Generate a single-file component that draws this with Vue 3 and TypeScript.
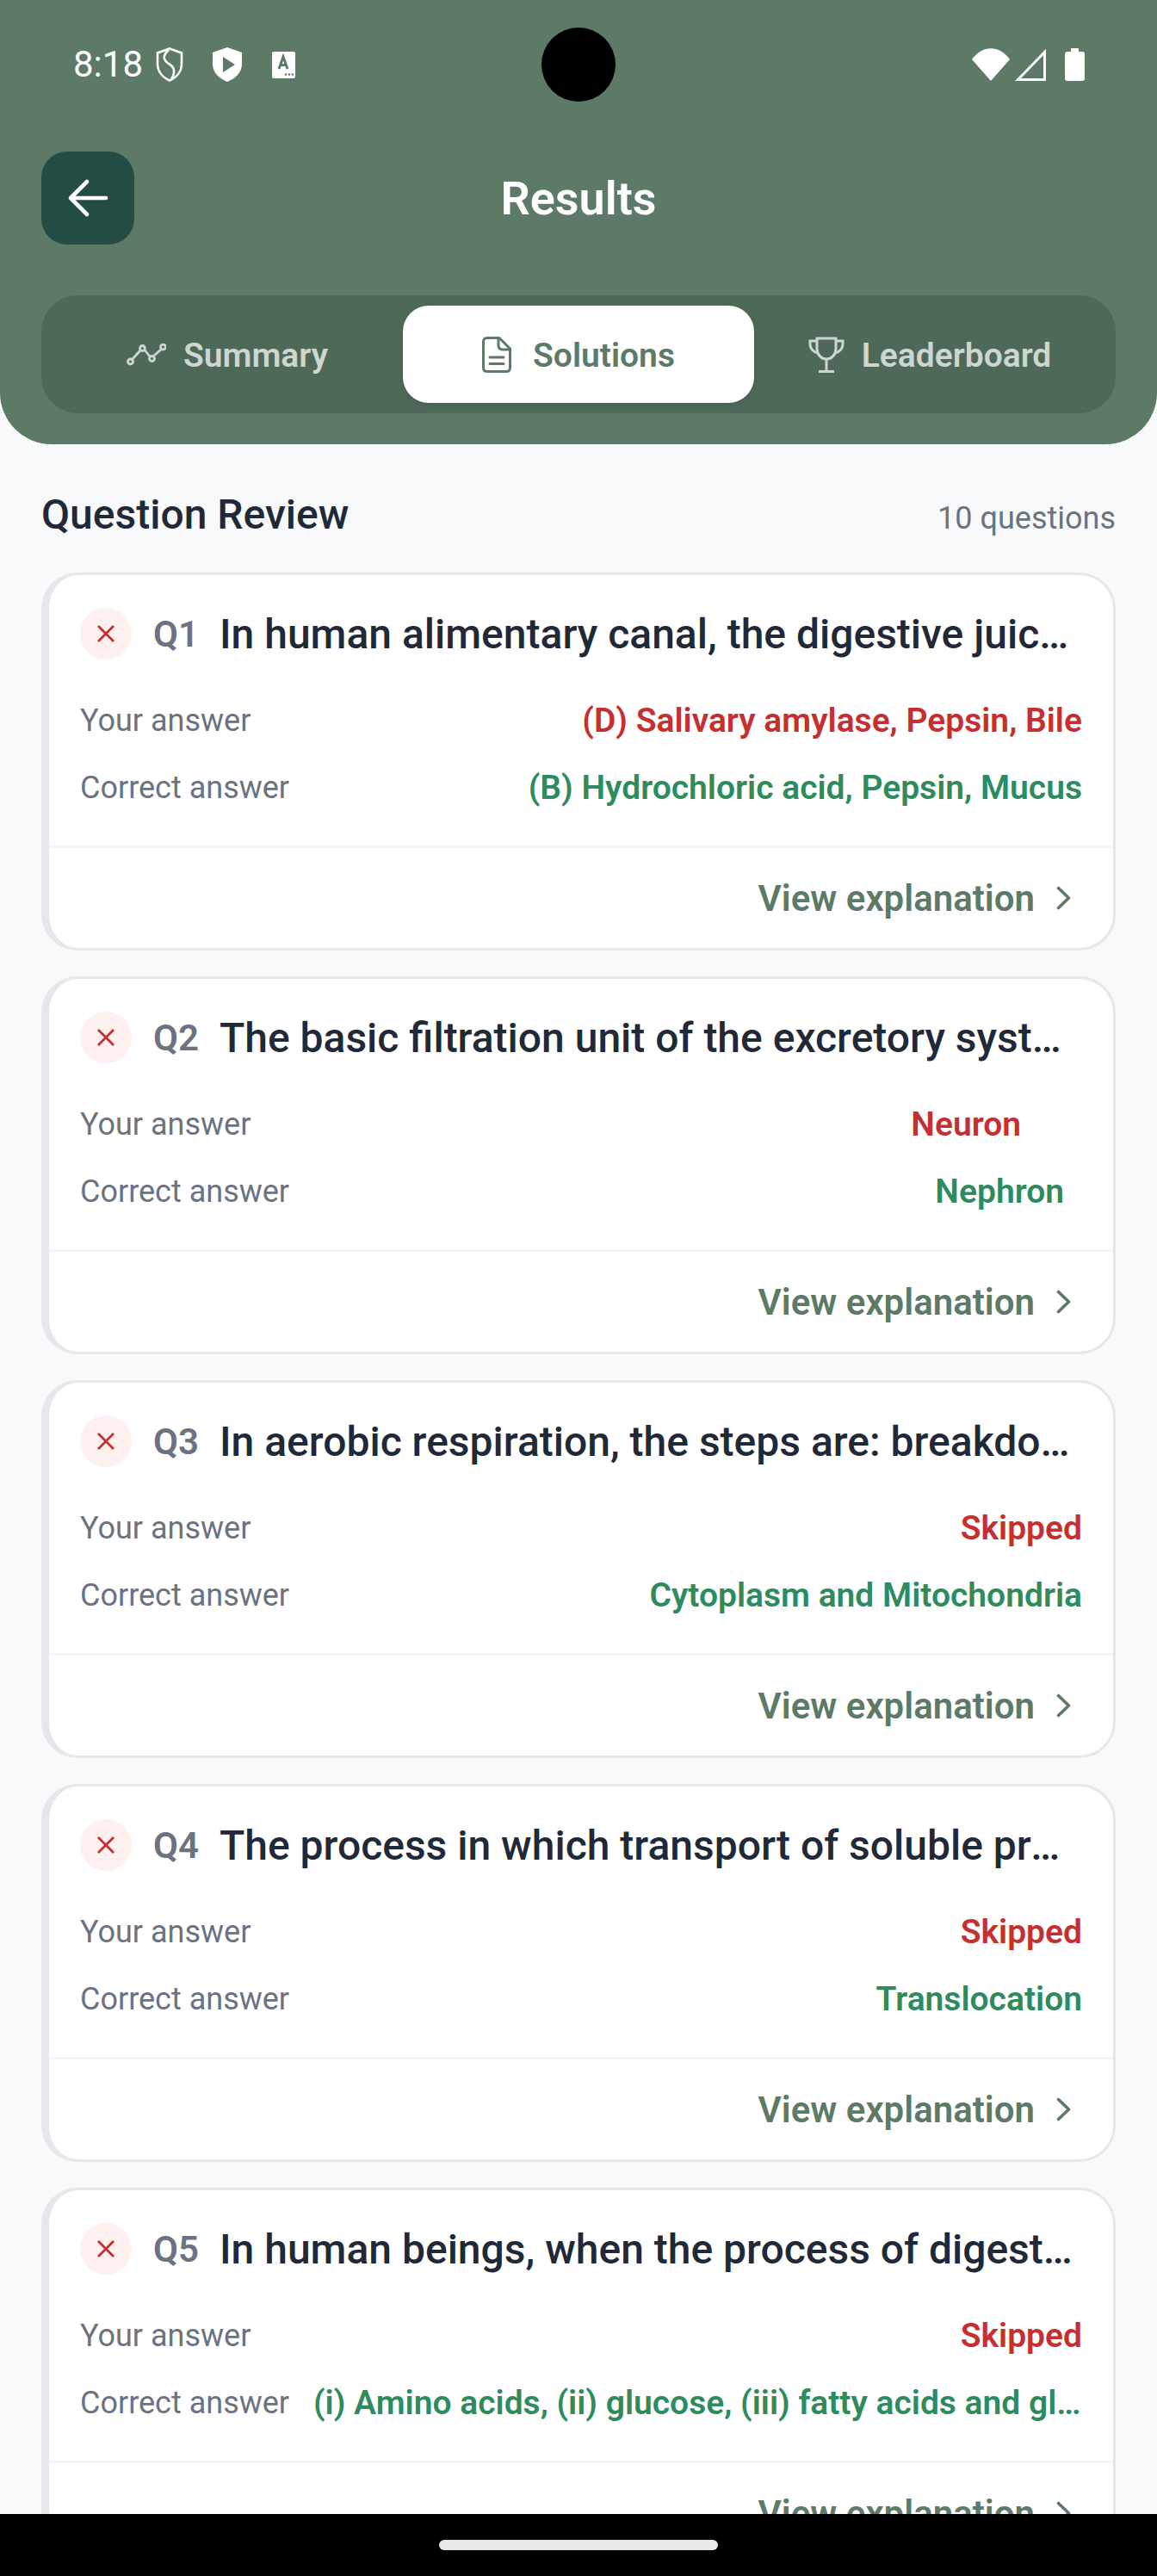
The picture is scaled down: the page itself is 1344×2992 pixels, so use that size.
<script setup lang="ts">
type Question = {
  id: number;
  title: string;
  yours: string;
  correct: string;
  yoursInset?: number;
  correctInset?: number;
};

const questions: Question[] = [
  {
    id: 1,
    title: "In human alimentary canal, the digestive juices secreted by the stomach contain",
    yours: "(D) Salivary amylase, Pepsin, Bile",
    correct: "(B) Hydrochloric acid, Pepsin, Mucus",
  },
  {
    id: 2,
    title: "The basic filtration unit of the excretory system in human beings is called",
    yours: "Neuron",
    correct: "Nephron",
    yoursInset: 71,
    correctInset: 21,
  },
  {
    id: 3,
    title: "In aerobic respiration, the steps are: breakdown of glucose occurs in",
    yours: "Skipped",
    correct: "Cytoplasm and Mitochondria",
  },
  {
    id: 4,
    title: "The process in which transport of soluble products of photosynthesis takes place",
    yours: "Skipped",
    correct: "Translocation",
  },
  {
    id: 5,
    title: "In human beings, when the process of digestion is completed, the food is broken into",
    yours: "Skipped",
    correct: "(i) Amino acids, (ii) glucose, (iii) fatty acids and glycerol",
  },
];
</script>

<template>
  <div class="screen">
    <header class="header">
      <div class="status">
        <div class="status-left">
          <span class="time">8:18</span>
          <svg class="ic-shield" viewBox="0 0 32 40" fill="none" stroke="#fff" stroke-width="2.6">
            <path d="M16 1.5 L30 6.5 V19 C30 28 24 35 16 38.5 C8 35 2 28 2 19 V6.5 Z" />
            <path d="M15 3 C7 10 9 15 15 19 C22 23 23 29 18 37" />
          </svg>
          <svg class="ic-play" viewBox="0 0 34 40">
            <path fill="#fff" d="M17 0 L34 6 V19 C34 29 27 36 17 40 C7 36 0 29 0 19 V6 Z" />
            <path fill="#5c7a66" d="M12 11 L26 20 L12 29 Z" />
          </svg>
          <svg class="ic-a" viewBox="0 0 27 31">
            <rect width="27" height="31" rx="2" fill="#fff" />
            <path d="M8 20 L13 6 L18 20 M9.5 15.5 H16.5" fill="none" stroke="#5c7a66" stroke-width="3" />
            <circle cx="16" cy="26.5" r="1.3" fill="#5c7a66" />
            <circle cx="20" cy="26.5" r="1.3" fill="#5c7a66" />
            <circle cx="24" cy="26.5" r="1.3" fill="#5c7a66" />
          </svg>
        </div>
        <div class="camera"></div>
        <div class="status-right">
          <svg class="ic-wifi" viewBox="0 0 44 38">
            <path fill="#fff" d="M0 13 C12 -4 32 -4 44 13 L22 38 Z" />
          </svg>
          <svg class="ic-signal" viewBox="0 0 36 37" fill="none" stroke="#fff" stroke-width="3">
            <path d="M34.5 3.5 V35.5 H3.5 Z" />
          </svg>
          <svg class="ic-battery" viewBox="0 0 23 38">
            <path fill="#fff" d="M7 0 H16 V4 H20 Q23 4 23 7 V35 Q23 38 20 38 H3 Q0 38 0 35 V7 Q0 4 3 4 H7 Z" />
          </svg>
        </div>
      </div>

      <div class="nav">
        <button class="back" type="button">
          <svg viewBox="0 0 48 48" fill="none" stroke="#fff" stroke-width="4.6" stroke-linecap="round" stroke-linejoin="round">
            <path d="M45 24 H4 M23 5 L4 24 L23 43" />
          </svg>
        </button>
        <h1 class="title">Results</h1>
      </div>

      <div class="tabs">
        <div class="tab">
          <svg class="tab-icon trend" viewBox="0 0 46 26" fill="none" stroke="currentColor" stroke-width="2.8">
            <path d="M6.5 18.5 L16 8 M21.5 8 L27 15 M32 14 L40.5 6.5" />
            <circle cx="4.5" cy="21" r="3" />
            <circle cx="18.5" cy="5.5" r="3" />
            <circle cx="29.5" cy="17.5" r="3" />
            <circle cx="42.5" cy="4" r="3" />
          </svg>
          <span>Summary</span>
        </div>
        <div class="tab active">
          <svg class="tab-icon doc" viewBox="0 0 34 42" fill="none" stroke="currentColor" stroke-width="3" stroke-linejoin="round" stroke-linecap="round">
            <path d="M20 1.5 H6 Q1.5 1.5 1.5 6 V36 Q1.5 40.5 6 40.5 H28 Q32.5 40.5 32.5 36 V14 Z" />
            <path d="M19 2 V10 Q19 15 24 15 H32" />
            <path d="M9 24 H25 M9 31.5 H25" />
          </svg>
          <span>Solutions</span>
        </div>
        <div class="tab">
          <svg class="tab-icon cup" viewBox="0 0 42 42" fill="none" stroke="currentColor" stroke-width="3">
            <path d="M10 2 H32 V14 C32 21 27 26 21 26 C15 26 10 21 10 14 Z" />
            <path d="M10 5 H2 V9 C2 14 6 18 11 19 M32 5 H40 V9 C40 14 36 18 31 19" />
            <path d="M21 26 V40 M12 40.5 H30" />
          </svg>
          <span>Leaderboard</span>
        </div>
      </div>
    </header>

    <main class="content">
      <div class="section-head">
        <h2>Question Review</h2>
        <span>10 questions</span>
      </div>

      <article v-for="q in questions" :key="q.id" class="card">
        <div class="card-body">
          <div class="q-head">
            <span class="wrong">
              <svg viewBox="0 0 20 20" fill="none" stroke="#c62f2f" stroke-width="2.8">
                <path d="M1 1 L19 19 M19 1 L1 19" />
              </svg>
            </span>
            <span class="q-num">Q{{ q.id }}</span>
            <span class="q-title">{{ q.title }}</span>
          </div>
          <div class="row">
            <span class="label">Your answer</span>
            <span class="value bad" :style="{ marginRight: (q.yoursInset || 0) + 'px' }">{{ q.yours }}</span>
          </div>
          <div class="row">
            <span class="label">Correct answer</span>
            <span class="value good" :style="{ marginRight: (q.correctInset || 0) + 'px' }">{{ q.correct }}</span>
          </div>
        </div>
        <div class="card-foot">
          <span>View explanation</span>
          <svg viewBox="0 0 17 28" fill="none" stroke="#5c7a66" stroke-width="3.6" stroke-linecap="round" stroke-linejoin="round">
            <path d="M2.5 2.5 L14.5 14 L2.5 25.5" />
          </svg>
        </div>
      </article>
    </main>

    <footer class="gesture">
      <div class="pill"></div>
    </footer>
  </div>
</template>

<style>
html,
body {
  margin: 0;
  background: #f8f9fb;
}
</style>

<style scoped>
.screen {
  width: 1344px;
  height: 2992px;
  display: flex;
  flex-direction: column;
  overflow: hidden;
  background: #f8f9fb;
  font-family: Roboto, "Liberation Sans", sans-serif;
}

.header {
  flex: none;
  height: 516px;
  box-sizing: border-box;
  padding: 0 48px;
  background: #5c7a66;
  border-radius: 0 0 60px 60px;
  color: #fff;
}

.status {
  position: relative;
  height: 78px;
  padding-top: 36px;
  margin: 0 36px 62px 37px;
  display: flex;
  align-items: center;
  justify-content: space-between;
}

.status-left,
.status-right {
  display: flex;
  align-items: center;
}

.time {
  font-size: 42px;
  line-height: 48px;
  width: 96px;
}

.ic-shield {
  width: 32px;
  height: 40px;
}

.ic-play {
  width: 34px;
  height: 40px;
  margin-left: 34px;
}

.ic-a {
  width: 27px;
  height: 31px;
  margin-left: 35px;
}

.camera {
  position: absolute;
  left: 544px;
  top: 32px;
  width: 86px;
  height: 86px;
  border-radius: 50%;
  background: #000;
}

.ic-wifi {
  width: 44px;
  height: 38px;
}

.ic-signal {
  width: 36px;
  height: 37px;
  margin-left: 6px;
}

.ic-battery {
  width: 23px;
  height: 38px;
  margin-left: 22px;
}

.nav {
  position: relative;
  height: 108px;
  display: flex;
  align-items: center;
  justify-content: center;
}

.back {
  position: absolute;
  left: 0;
  top: 0;
  width: 108px;
  height: 108px;
  padding: 30px;
  border: 0;
  border-radius: 30px;
  background: #234c45;
}

.back svg {
  display: block;
  width: 48px;
  height: 48px;
}

.title {
  margin: 2px 0 0;
  font-size: 54px;
  line-height: 72px;
  font-weight: 600;
}

.tabs {
  margin-top: 59px;
  height: 137px;
  box-sizing: border-box;
  padding: 12px;
  display: grid;
  grid-template-columns: repeat(3, 1fr);
  background: #4f6958;
  border-radius: 42px;
}

.tab {
  display: flex;
  align-items: center;
  justify-content: center;
  gap: 20px;
  border-radius: 30px;
  color: #cdd6cf;
  font-size: 39px;
  font-weight: 600;
}

.tab span {
  padding-top: 2px;
}

.tab.active {
  background: #fff;
  color: #5c7a66;
  gap: 25px;
  box-shadow: 0 3px 6px rgba(0, 0, 0, 0.1);
}

.tab-icon {
  flex: none;
}

.trend {
  width: 46px;
  height: 26px;
}

.doc {
  width: 34px;
  height: 42px;
}

.cup {
  width: 42px;
  height: 42px;
}

.content {
  flex: 1;
  min-height: 0;
  overflow: hidden;
  padding: 52px 48px 0;
}

.section-head {
  display: flex;
  align-items: baseline;
  justify-content: space-between;
  height: 60px;
  margin-bottom: 37px;
}

.section-head h2 {
  margin: 0;
  font-size: 48px;
  line-height: 60px;
  font-weight: 500;
  color: #1f2937;
}

.section-head span {
  font-size: 36px;
  color: #6b7280;
}

.card {
  background: #fff;
  border: 3px solid #e5e7eb;
  border-left-width: 9px;
  border-radius: 42px;
  margin-bottom: 30px;
}

.card-body {
  padding: 38px 36px 43px;
  border-bottom: 3px solid #f3f4f6;
}

.q-head {
  display: flex;
  align-items: center;
  height: 60px;
  margin-bottom: 47px;
}

.wrong {
  flex: none;
  width: 60px;
  height: 60px;
  border-radius: 50%;
  background: #fdf0ef;
  display: flex;
  align-items: center;
  justify-content: center;
}

.wrong svg {
  width: 20px;
  height: 20px;
}

.q-num {
  flex: none;
  margin-left: 25px;
  width: 77px;
  font-size: 42px;
  font-weight: 600;
  color: #6b7280;
}

.q-title {
  flex: 1;
  min-width: 0;
  font-size: 48px;
  font-weight: 500;
  color: #1f2937;
  white-space: nowrap;
  overflow: hidden;
  text-overflow: ellipsis;
}

.row {
  display: flex;
  align-items: center;
  justify-content: space-between;
  gap: 28px;
  height: 48px;
}

.row + .row {
  margin-top: 30px;
}

.label {
  flex: none;
  font-size: 36px;
  color: #6b7280;
}

.value {
  min-width: 0;
  font-size: 39px;
  font-weight: 600;
  white-space: nowrap;
  overflow: hidden;
  text-overflow: ellipsis;
}

.bad {
  color: #c62f2f;
}

.good {
  color: #2e8b5e;
}

.card-foot {
  height: 116px;
  box-sizing: border-box;
  padding: 0 49px 0 0;
  display: flex;
  align-items: center;
  justify-content: flex-end;
  gap: 25px;
  font-size: 42px;
  font-weight: 600;
  color: #5c7a66;
}

.card-foot svg {
  width: 17px;
  height: 28px;
}

.gesture {
  flex: none;
  height: 72px;
  background: #000;
  display: flex;
  align-items: center;
  justify-content: center;
}

.pill {
  width: 324px;
  height: 12px;
  border-radius: 6px;
  background: #e8e8e8;
}
</style>
